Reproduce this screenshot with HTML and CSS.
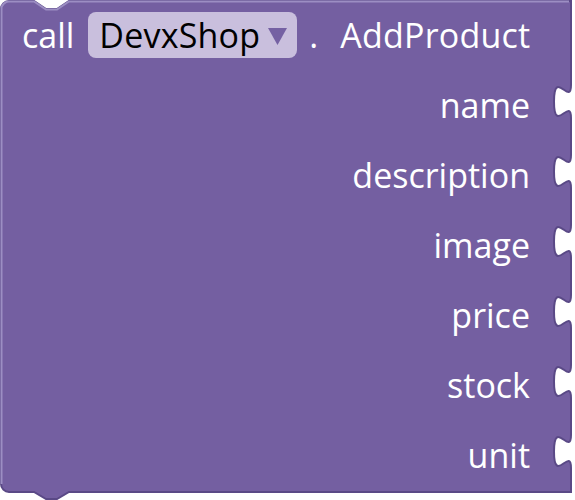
FILE: index.html
```html
<!DOCTYPE html>
<html>
<head>
<meta charset="utf-8">
<link rel="stylesheet" href="styles.css">
</head>
<body>
<div class="block">
  <svg class="shape" width="575" height="500" viewBox="0 0 575 500">
    <path class="fill" d="M1,9 A8,8 0 0 1 9,1 H34 l12,8 h11 l12,-8 H571 V74 v11 c0,22 -17,-17.6 -17,16.5 s17,-5.5 17,16.5 V144 v11 c0,22 -17,-17.6 -17,16.5 s17,-5.5 17,16.5 V214 v11 c0,22 -17,-17.6 -17,16.5 s17,-5.5 17,16.5 V284 v11 c0,22 -17,-17.6 -17,16.5 s17,-5.5 17,16.5 V354 v11 c0,22 -17,-17.6 -17,16.5 s17,-5.5 17,16.5 V424 v11 c0,22 -17,-17.6 -17,16.5 s17,-5.5 17,16.5 V492 H69 l-12,7 h-11 l-12,-7 H9 A8,8 0 0 1 1,484 Z"/>
    <path class="light" d="M1.5,484 V9 A7.5,7.5 0 0 1 9,1.5 H34 l12,8 h11 l12,-8 H569"/>
  </svg>
  <div class="content">
    <div class="header">
      <span class="word call">call</span>
      <span class="dropdown">
        <span class="dd-text">DevxShop</span>
        <svg class="arrow" width="19" height="18" viewBox="0 0 19 18"><polygon points="0,1 19,1 9.5,18"/></svg>
      </span>
      <span class="word dot">.</span>
      <span class="word method">AddProduct</span>
    </div>
    <div class="inputs">
      <div class="input">name</div>
      <div class="input">description</div>
      <div class="input">image</div>
      <div class="input">price</div>
      <div class="input">stock</div>
      <div class="input">unit</div>
    </div>
  </div>
</div>
</body>
</html>
```

FILE: styles.css
```css
html, body {
  margin: 0;
  padding: 0;
  background: #ffffff;
}

body {
  font-family: "Open Sans", "Noto Sans", sans-serif;
  font-size: 34px;
  color: #ffffff;
}

.block {
  position: relative;
  width: 575px;
  height: 500px;
}

.shape {
  position: absolute;
  left: 0;
  top: 0;
}

.shape .fill {
  fill: #745fa1;
  stroke: #5a4986;
  stroke-width: 2;
}

.shape .light {
  fill: none;
  stroke: #9c8ec3;
  stroke-width: 2;
}

.content {
  position: relative;
  padding: 12px 0 0 22px;
}

.header {
  display: flex;
  align-items: center;
  height: 46px;
}

.word {
  line-height: 46px;
  white-space: nowrap;
}

.call {
  margin-right: 14px;
}

.dropdown {
  display: flex;
  align-items: center;
  box-sizing: border-box;
  width: 209px;
  height: 46px;
  padding: 0 10px 0 11px;
  background: #c9bfdd;
  border-radius: 8px;
  color: #000000;
}

.dd-text {
  line-height: 46px;
  letter-spacing: 0.2px;
}

.arrow {
  margin-left: auto;
  margin-top: 2px;
  fill: #7561a3;
}

.dot {
  margin-left: 12px;
}

.method {
  margin-left: 22px;
  letter-spacing: 0.2px;
}

.inputs {
  display: flex;
  flex-direction: column;
  align-items: flex-end;
  padding-right: 45px;
  margin-top: 12px;
}

.input {
  height: 70px;
  line-height: 70px;
  white-space: nowrap;
}
```
